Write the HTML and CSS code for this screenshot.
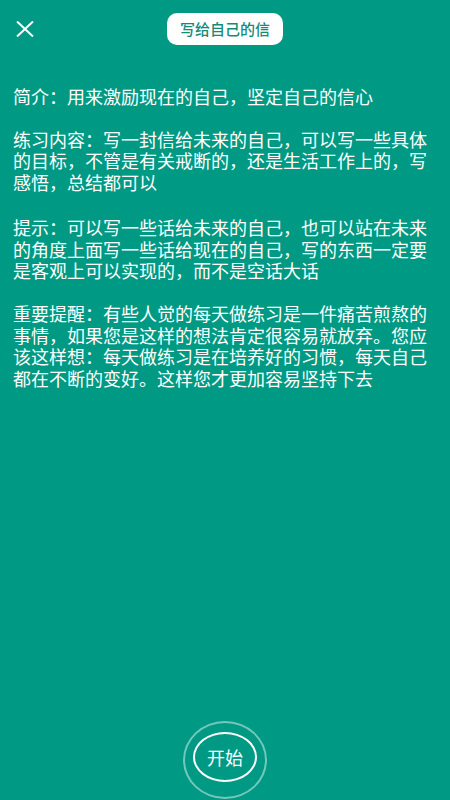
FILE: index.html
```html
<!DOCTYPE html>
<html lang="zh-CN">
<head>
<meta charset="utf-8">
<title>写给自己的信</title>
<link rel="stylesheet" href="styles.css">
</head>
<body>
<div class="page">
  <header class="topbar">
    <div class="close">
      <svg width="18" height="16" viewBox="0 0 18 16" aria-hidden="true">
        <path d="M1 0.5 L17 15.5 M17 0.5 L1 15.5" stroke="#fff" stroke-width="2" fill="none" stroke-linecap="butt"/>
      </svg>
    </div>
    <div class="title">写给自己的信</div>
    <div class="spacer"></div>
  </header>
  <main class="content">
    <p class="para">简介：用来激励现在的自己，坚定自己的信心</p>
    <p class="para para-wide">练习内容：写一封信给未来的自己，可以写一些具体的目标，不管是有关戒断的，还是生活工作上的，写感悟，总结都可以</p>
    <p class="para">提示：可以写一些话给未来的自己，也可以站在未来的角度上面写一些话给现在的自己，写的东西一定要是客观上可以实现的，而不是空话大话</p>
    <p class="para">重要提醒：有些人觉的每天做练习是一件痛苦煎熬的事情，如果您是这样的想法肯定很容易就放弃。您应该这样想：每天做练习是在培养好的习惯，每天自己都在不断的变好。这样您才更加容易坚持下去</p>
  </main>
  <div class="start">
    <div class="ring">
      <div class="btn">开始</div>
    </div>
  </div>
</div>
</body>
</html>
```
FILE: styles.css
```css
html, body {
  margin: 0;
  padding: 0;
}
body {
  background: #009a84;
  font-family: "Noto Sans CJK SC", "Noto Sans", sans-serif;
  color: #fff;
}
.page {
  height: 800px;
  display: flex;
  flex-direction: column;
  overflow: hidden;
}
.topbar {
  display: grid;
  grid-template-columns: 1fr auto 1fr;
  align-items: center;
  padding: 13px 16px 0;
}
.close {
  display: flex;
  align-items: center;
  height: 16px;
}
.close svg {
  display: block;
}
.title {
  background: #fff;
  color: #168a78;
  font-size: 15px;
  font-weight: 500;
  height: 32px;
  line-height: 32px;
  padding: 0 13px;
  border-radius: 10px;
  white-space: nowrap;
}
.content {
  padding: 41px 13px 0;
}
.para {
  margin: 0 0 21px;
  font-size: 18px;
  line-height: 21.7px;
}
.para-wide {
  margin-bottom: 23px;
}
.start {
  margin-top: auto;
  display: flex;
  justify-content: center;
  padding-bottom: 1px;
}
.ring {
  width: 84px;
  height: 78px;
  box-sizing: border-box;
  border: 2px solid rgba(255, 255, 255, 0.45);
  border-radius: 50%;
  display: flex;
  align-items: center;
  justify-content: center;
  padding-bottom: 7px;
}
.btn {
  width: 64px;
  height: 50px;
  box-sizing: border-box;
  border: 2px solid #fff;
  border-radius: 50%;
  display: flex;
  align-items: center;
  justify-content: center;
  font-size: 18px;
  color: #fff;
}
```
